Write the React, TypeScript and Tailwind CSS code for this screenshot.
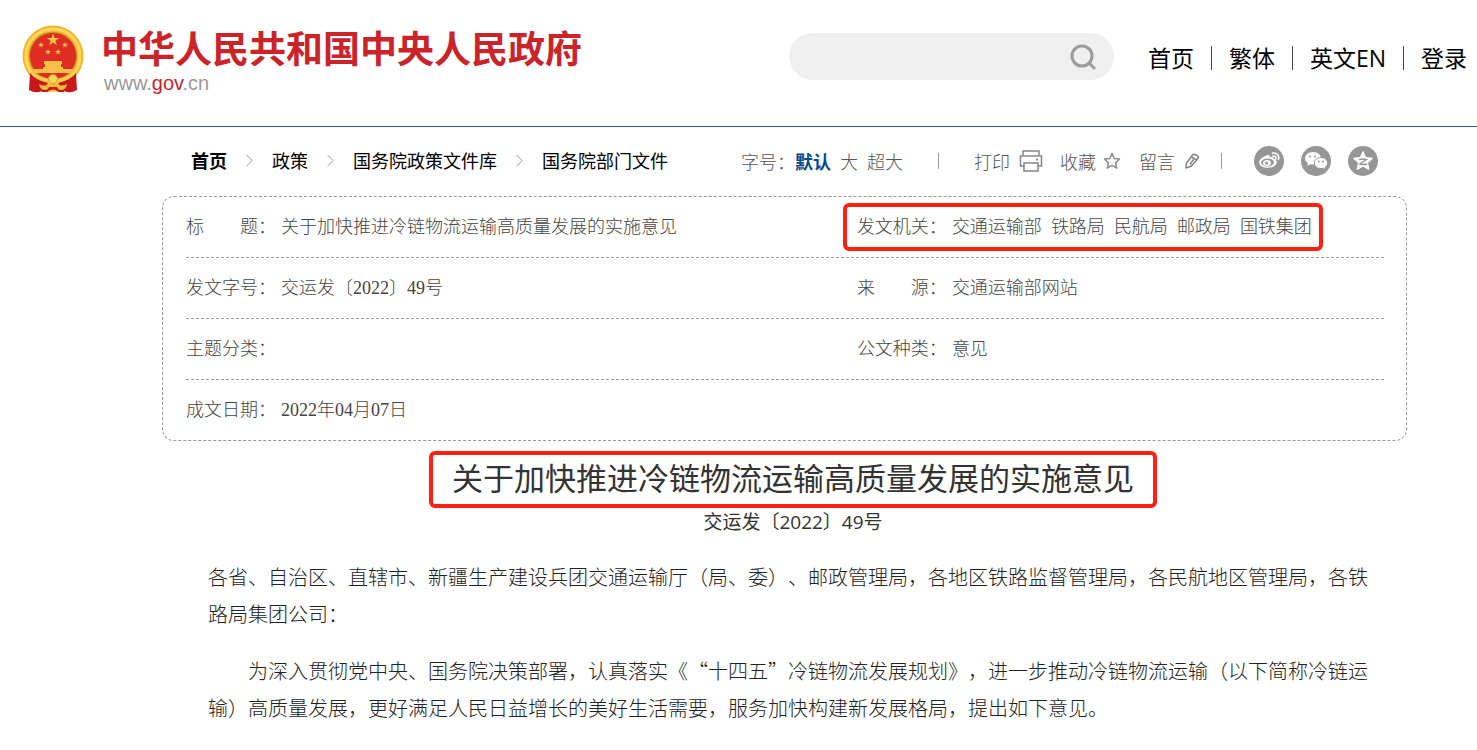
import React from 'react';
import { ChevronRight } from 'lucide-react';

const topLinks = ['首页', '繁体', '英文EN', '登录'];
const crumbs = ['首页', '政策', '国务院政策文件库', '国务院部门文件'];

const metaRows = [
  [
    { label: '标\u3000\u3000题：', values: ['关于加快推进冷链物流运输高质量发展的实施意见'] },
    {
      label: '发文机关：',
      values: ['交通运输部', '铁路局', '民航局', '邮政局', '国铁集团'],
      marked: true,
    },
  ],
  [
    { label: '发文字号：', values: ['交运发〔2022〕49号'] },
    { label: '来\u3000\u3000源：', values: ['交通运输部网站'] },
  ],
  [
    { label: '主题分类：', values: [] },
    { label: '公文种类：', values: ['意见'] },
  ],
  [{ label: '成文日期：', values: ['2022年04月07日'] }],
];

function Emblem() {
  const star = 'M0-1 .24-.32.95-.31.38.12.59.81 0 .4-.59.81-.38.12-.95-.31-.24-.32Z';
  return (
    <svg viewBox="0 0 62 68" className="h-[68px] w-[62px] shrink-0" aria-hidden="true">
      <circle cx="31" cy="31" r="30.5" fill="#f0b62c" />
      <circle cx="31" cy="31" r="27" fill="none" stroke="#f9d65c" strokeWidth="3" />
      <circle cx="31" cy="31" r="24" fill="#b98a1d" />
      <circle cx="31" cy="31" r="23" fill="#e02d24" />
      <g fill="#f3c04a">
        <path d={star} transform="translate(31 15) scale(6.5)" />
        <path d={star} transform="translate(19 20) scale(3.2)" />
        <path d={star} transform="translate(43 20) scale(3.2)" />
        <path d={star} transform="translate(26 27) scale(3.2)" />
        <path d={star} transform="translate(36 27) scale(3.2)" />
        <path d="M22 36h18v3h-1v3h2v2h10l2 4H9l2-4h10v-2h2v-3h-1Z" />
      </g>
      <path d="M11 48q20 12 40 0l-3 7q-17 8-34 0Z" fill="#f6cb4d" />
      <path d="M8 48q5 7 18 10l-6 8-3 1q-5 1-10-2ZM54 48q-5 7-18 10l6 8 3 1q5 1 10-2Z" fill="#c9181d" />
      <path d="M18 62h26l-2 5H20Z" fill="#c9181d" />
      <circle cx="31" cy="54" r="4.5" fill="#f9d65c" stroke="#d99a20" />
      <path d="M17 59q6 3 11 0h6q5 3 11 0-1 6-6 6-3 0-4-3h-8q-1 3-4 3-5 0-6-6Z" fill="#efbb38" />
      <path d="M25 67q6-5 12 0Z" fill="#f6cb4d" />
    </svg>
  );
}

function PrinterIcon() {
  return (
    <svg viewBox="0 0 24 22" className="h-[22px] w-6" fill="none" stroke="#858585" strokeWidth="1.5" aria-hidden="true">
      <path d="M4 5V1h16v4M5 16H1.5V6h21v10H19" />
      <path d="M5 13h14v8H5Z" />
      <path d="M17 9.500h2" strokeWidth="2" />
    </svg>
  );
}

function StarIcon() {
  return (
    <svg viewBox="0 0 18 18" className="size-[18px]" fill="none" stroke="#8c8c8c" strokeWidth="1.5" strokeLinejoin="round" aria-hidden="true">
      <path d="m9 1.5 2.2 4.900 5.300.6-3.900 3.600 1.100 5.400L9 13.300 4.300 16l1.100-5.400L1.500 7l5.300-.6Z" />
    </svg>
  );
}

function PencilIcon() {
  return (
    <svg viewBox="0 0 16 16" className="size-4" fill="none" stroke="#858585" strokeWidth="1.5" strokeLinejoin="round" aria-hidden="true">
      <path d="m2 15 .5-5L8.500 2q1-1.200 2.500-.5l2.500 1.300q1.500 1 .5 2.500L7.500 13Z" />
      <path d="m7.500 4 5 3M9.500 6.500 6 11.500" />
    </svg>
  );
}

function WeiboIcon() {
  return (
    <svg viewBox="0 0 30 30" className="size-[30px]" aria-hidden="true">
      <circle cx="15" cy="15" r="15" fill="#969696" />
      <path
        d="M12.500 9.500c1.800-.8 3.500-.4 3 1.700 2.500-1 4.800-.6 4.200 1.500 2 .6 3 1.700 3 3.200 0 3.500-4.300 5.900-9 5.900-4.800 0-8.500-2.200-8.500-5.600 0-2.500 3.500-5.600 7.300-6.700Z"
        fill="#fff"
      />
      <ellipse cx="13.5" cy="16.5" rx="6.500" ry="4" fill="#969696" />
      <ellipse cx="13" cy="17" rx="4" ry="3" fill="#fff" />
      <circle cx="12.5" cy="17.3" r="1.500" fill="#969696" />
      <path d="M18.500 7.200c4-1 7.300 2.300 6 6.200M19 10c2-.4 3.400 1 2.900 3" fill="none" stroke="#fff" strokeWidth="1.5" strokeLinecap="round" />
    </svg>
  );
}

function WechatIcon() {
  return (
    <svg viewBox="0 0 30 30" className="size-[30px]" aria-hidden="true">
      <circle cx="15" cy="15" r="15" fill="#969696" />
      <path d="M12 6c-4.500 0-8 2.800-8 6.300 0 2 1.100 3.700 3 4.900L6.300 20l3-1.700q1.400.4 2.700.3c4.500 0 8-2.800 8-6.300S16.500 6 12 6Z" fill="#fff" />
      <path d="M20 11.500c-3.800 0-6.700 2.400-6.700 5.500s2.900 5.600 6.700 5.600q1.200 0 2.300-.4l2.500 1.500-.6-2.500c1.500-1 2.400-2.500 2.400-4.200 0-3.100-2.900-5.500-6.600-5.500Z" fill="#fff" stroke="#969696" />
      <g fill="#969696">
        <circle cx="9" cy="10.5" r="1" />
        <circle cx="14" cy="10.5" r="1" />
        <circle cx="17.7" cy="15.5" r="1" />
        <circle cx="22" cy="15.5" r="1" />
      </g>
    </svg>
  );
}

function QzoneIcon() {
  return (
    <svg viewBox="0 0 30 30" className="size-[30px]" aria-hidden="true">
      <circle cx="15" cy="15" r="15" fill="#969696" />
      <path
        d="m15 5.500 2.800 6 6.700.8-4.900 4.500 1.300 6.700-5.900-3.300-5.900 3.300 1.300-6.700-4.900-4.500 6.700-.8Z"
        fill="#fff"
        stroke="#fff"
        strokeLinejoin="round"
      />
      <path d="M11 13.500q4-1 7.500 0L12 18q3.500 1 7 0" fill="none" stroke="#969696" strokeWidth="1.5" />
    </svg>
  );
}

export default function App() {
  return (
    <div
      lang="zh-CN"
      className="min-h-screen bg-white font-['Noto_Sans_CJK_SC',sans-serif] text-lg/7 font-light text-[#444] [text-spacing-trim:space-all]"
    >
      {/* Header */}
      <header className="flex h-[127px] items-start justify-between border-b border-[#2a5788] pr-[10px] pl-[22px]">
        <a href="#" className="flex items-start gap-[17px] pt-[25px]">
          <Emblem />
          <div className="pt-[2px] font-['Liberation_Sans','Noto_Sans_CJK_SC',sans-serif]">
            <div className="text-[37px]/[48px] font-bold text-[#cc2229]">中华人民共和国中央人民政府</div>
            <div className="pl-[3px] text-xl/4 font-normal text-[#999]">
              www.<span className="text-[#cc2229]">gov</span>.cn
            </div>
          </div>
        </a>

        <div className="flex items-center gap-[34px] pt-[33px] font-['Open_Sans','Noto_Sans_CJK_SC',sans-serif]">
          <form className="flex h-[47px] w-[325px] items-center rounded-full bg-[#efefef] pr-[18px] pl-5">
            <input type="text" aria-label="搜索" className="min-w-0 flex-1 bg-transparent outline-none" />
            <button type="button" aria-label="搜索">
              <svg viewBox="0 0 26 26" className="size-[26px]" fill="none" stroke="#9b9b9b" strokeWidth="3" strokeLinecap="round" aria-hidden="true">
                <circle cx="12" cy="12" r="10" />
                <path d="m20 20 4 4" />
              </svg>
            </button>
          </form>
          <nav className="flex items-center pt-[2px] text-[23px]/8 font-normal text-black">
            {topLinks.map((link, i) => (
              <React.Fragment key={link}>
                {i > 0 && <span className="mx-[17px] h-6 w-px bg-[#444]" />}
                <a href="#">{link}</a>
              </React.Fragment>
            ))}
          </nav>
        </div>
      </header>

      <div className="pr-[70px] pl-[162px]">
        {/* Breadcrumb and page tools */}
        <div className="flex h-[69px] items-center justify-between px-[29px] pb-px">
          <nav className="flex items-center pb-[2px] font-normal text-black">
            {crumbs.map((crumb, i) => (
              <React.Fragment key={crumb}>
                {i > 0 && <ChevronRight className="mx-3 size-[21px] text-[#888]" strokeWidth={1} />}
                <a href="#" className={i === 0 ? 'font-bold' : ''}>
                  {crumb}
                </a>
              </React.Fragment>
            ))}
          </nav>
          <div className="flex items-center text-[#555]">
            <span>字号：</span>
            <button type="button" className="font-bold text-[#004a8f]">默认</button>
            <button type="button" className="ml-[9px]">大</button>
            <button type="button" className="ml-[9px]">超大</button>
            <span className="ml-[35px] h-4 w-px bg-[#999]" />
            <button type="button" className="ml-[35px] flex items-center gap-[9px]">
              打印 <PrinterIcon />
            </button>
            <button type="button" className="ml-[17px] flex items-center gap-[7px]">
              收藏 <StarIcon />
            </button>
            <button type="button" className="ml-[18px] flex items-center gap-[9px]">
              留言 <PencilIcon />
            </button>
            <span className="ml-[21px] h-4 w-px bg-[#999]" />
            <div className="ml-8 flex gap-[17px]">
              <a href="#" aria-label="微博"><WeiboIcon /></a>
              <a href="#" aria-label="微信"><WechatIcon /></a>
              <a href="#" aria-label="QQ空间"><QzoneIcon /></a>
            </div>
          </div>
        </div>

        {/* Document info */}
        <table className="block rounded-xl border border-dashed border-[#999] pr-[22px] pl-[23px] font-['Liberation_Serif','Noto_Sans_CJK_SC',sans-serif]">
          <tbody className="block divide-y divide-dashed divide-[#999]">
            {metaRows.map((row) => (
              <tr key={row[0].label} className="grid h-[61px] grid-cols-[56%_44%] items-center last:h-[60px]">
                {row.map((item) => (
                  <td key={item.label} className="relative flex">
                    {'marked' in item && (
                      <span className="absolute -inset-y-[10px] -left-[14px] w-[480px] rounded-md border-4 border-[#fe2012]" />
                    )}
                    <span className="w-[95px] shrink-0">{item.label}</span>
                    <span className="flex gap-[9px] whitespace-nowrap">
                      {item.values.map((value) => (
                        <span key={value}>{value}</span>
                      ))}
                    </span>
                  </td>
                ))}
              </tr>
            ))}
          </tbody>
        </table>

        {/* Article */}
        <article className="pr-[39px] pl-[46px] text-[#222]">
          <div className="flex flex-col items-center pt-[10px] pl-[10px] text-[#333]">
            <h1 className="flex h-[57px] w-[728px] items-center justify-center rounded-md border-4 border-[#fe2012] pb-[6px] text-[31px]/10 font-normal whitespace-nowrap">
              关于加快推进冷链物流运输高质量发展的实施意见
            </h1>
            <p className="font-['Open_Sans','Noto_Sans_CJK_SC',sans-serif] text-[19px]/7 font-normal">交运发〔2022〕49号</p>
          </div>
          <div className="mt-[22px] space-y-5 text-xl/[37px]">
            <p>
              各省、自治区、直辖市、新疆生产建设兵团交通运输厅（局、委）、邮政管理局，各地区铁路监督管理局，各民航地区管理局，各铁路局集团公司：
            </p>
            <p className="indent-10">
              为深入贯彻党中央、国务院决策部署，认真落实《“十四五”冷链物流发展规划》，进一步推动冷链物流运输（以下简称冷链运输）高质量发展，更好满足人民日益增长的美好生活需要，服务加快构建新发展格局，提出如下意见。
            </p>
          </div>
        </article>
      </div>
    </div>
  );
}
